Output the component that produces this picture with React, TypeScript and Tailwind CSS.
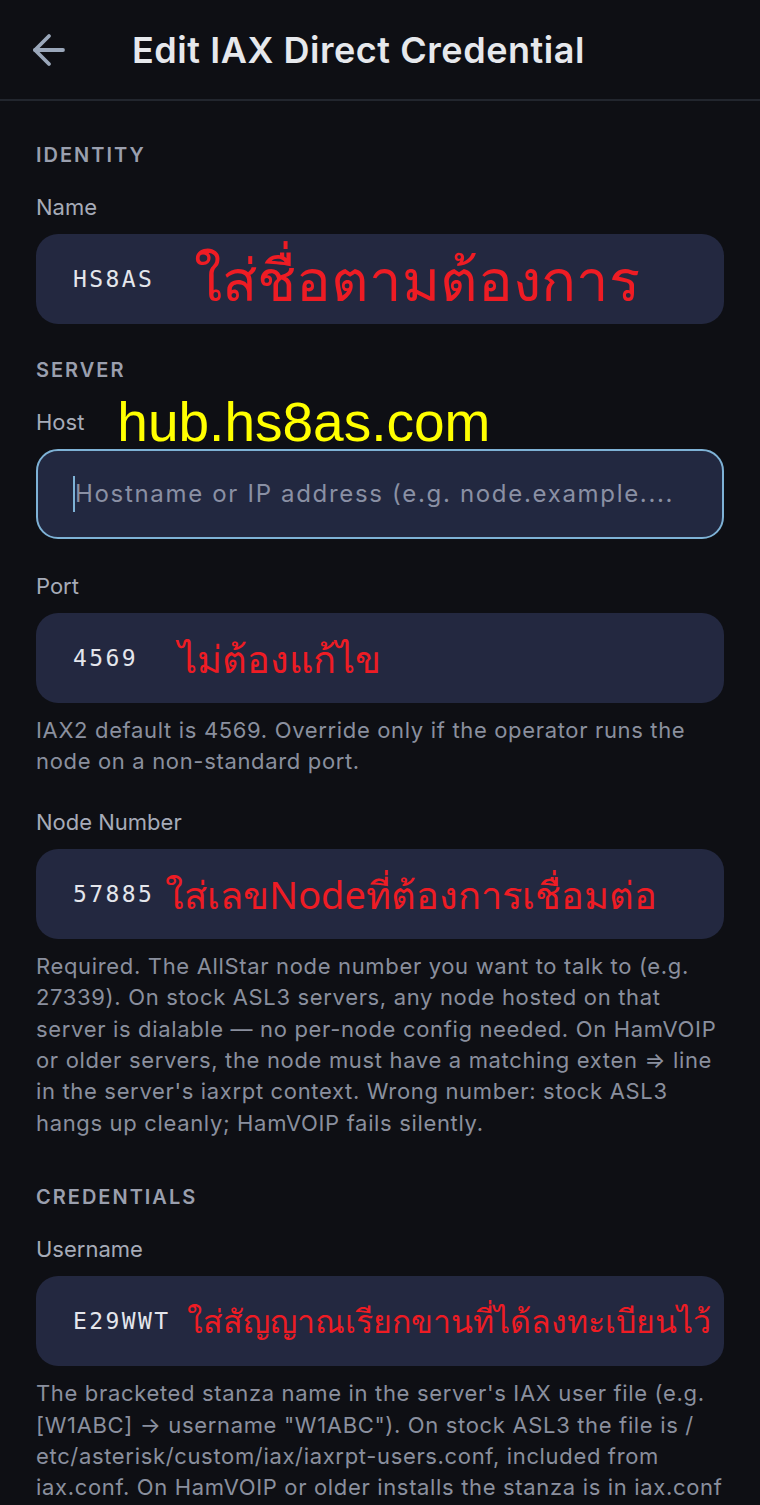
import { ArrowLeft } from "lucide-react";

const thai = { fontFamily: '"Noto Sans", "DejaVu Sans", sans-serif' };
const mono = { fontFamily: '"DejaVu Sans Mono", "Liberation Mono", monospace' };

function Section({ title }: { title: string }) {
  return (
    <div className="pt-[42px] pb-[26px] text-[20px] font-semibold leading-[24px] tracking-[0.1em] text-[#9a9fae]">
      {title}
    </div>
  );
}

function Label({ children }: { children: React.ReactNode }) {
  return <div className="text-[22px] leading-[28px] text-[#a6abb8]">{children}</div>;
}

function Box({
  children,
  focused,
}: {
  children: React.ReactNode;
  focused?: boolean;
}) {
  return (
    <div
      className={
        focused
          ? "mt-[13px] flex h-[90px] items-center rounded-[22px] border-2 border-[#7eb2d6] bg-[#222840] pl-[35px] pr-2"
          : "mt-[13px] flex h-[90px] items-center rounded-[22px] bg-[#232840] pl-[37px] pr-2"
      }
    >
      {children}
    </div>
  );
}

function Value({ text }: { text: string }) {
  return (
    <span style={mono} className="text-[23px] tracking-[2.4px] text-[#e4e6ec]">
      {text}
    </span>
  );
}

function Help({ children }: { children: React.ReactNode }) {
  return (
    <p className="mt-[12px] text-[22px] leading-[31.4px] tracking-[0.03em] text-[#8a8f9e]">
      {children}
    </p>
  );
}

function Note({ text, size }: { text: string; size: string }) {
  return (
    <span style={thai} className={`whitespace-nowrap font-normal text-[#ee1c24] ${size}`}>
      {text}
    </span>
  );
}

export default function App() {
  return (
    <div
      className="min-h-[1505px] w-[760px] bg-[#0e0f14]"
      style={{ fontFamily: 'Inter, Roboto, "Noto Sans", sans-serif' }}
    >
      <header className="flex h-[101px] items-center border-b-2 border-[#22262e]">
        <ArrowLeft className="ml-[25px] h-[48px] w-[48px] text-[#9aa7ba]" strokeWidth={1.9} />
        <h1 className="ml-[59px] text-[36px] font-semibold tracking-[0.015em] text-[#e6e8ec]">
          Edit IAX Direct Credential
        </h1>
      </header>

      <main className="px-[36px]">
        <Section title="IDENTITY" />
        <Label>Name</Label>
        <Box>
          <Value text="HS8AS" />
          <span className="ml-[40px]">
            <Note text="ใส่ชื่อตามต้องการ" size="text-[58px] leading-[60px]" />
          </span>
        </Box>

        <div className="-mt-[8px]" />
        <Section title="SERVER" />
        <div className="flex h-[28px] items-center">
          <Label>Host</Label>
          <span
            className="ml-[33px] text-[55px] leading-[28px] text-[#ffff00]"
            style={{ fontFamily: '"Liberation Sans", Arial, sans-serif' }}
          >
            hub.hs8as.com
          </span>
        </div>
        <Box focused>
          <span className="h-[36px] w-[2px] bg-[#7eb2d6]" />
          <span className="whitespace-nowrap text-[24px] tracking-[0.07em] text-[#8a90a4]">
            Hostname or IP address (e.g. node.example....
          </span>
        </Box>

        <div className="h-[33px]" />
        <Label>Port</Label>
        <Box>
          <Value text="4569" />
          <span className="ml-[40px]">
            <Note text="ไม่ต้องแก้ไข" size="text-[38px] leading-[48px]" />
          </span>
        </Box>
        <Help>
          IAX2 default is 4569. Override only if the operator runs the node on a
          non-standard port.
        </Help>

        <div className="h-[30px]" />
        <Label>Node Number</Label>
        <Box>
          <Value text="57885" />
          <span className="ml-[11px]">
            <Note text="ใส่เลขNodeที่ต้องการเชื่อมต่อ" size="text-[38px] leading-[48px]" />
          </span>
        </Box>
        <Help>
          Required. The AllStar node number you want to talk to (e.g. 27339). On
          stock ASL3 servers, any node hosted on that server is dialable — no
          per-node config needed. On HamVOIP or older servers, the node must have a
          matching exten ⇒ line in the server's iaxrpt context. Wrong number: stock
          ASL3 hangs up cleanly; HamVOIP fails silently.
        </Help>

        <div className="h-[4px]" />
        <Section title="CREDENTIALS" />
        <Label>Username</Label>
        <Box>
          <Value text="E29WWT" />
          <span className="ml-[17px]">
            <Note text="ใส่สัญญาณเรียกขานที่ได้ลงทะเบียนไว้" size="text-[32px] leading-[48px]" />
          </span>
        </Box>
        <Help>
          The bracketed stanza name in the server's IAX user file (e.g. [W1ABC] →
          username "W1ABC"). On stock ASL3 the file is /
          etc/asterisk/custom/iax/iaxrpt-users.conf, included from iax.conf. On
          HamVOIP or older installs the stanza is in iax.conf
        </Help>
      </main>
    </div>
  );
}
